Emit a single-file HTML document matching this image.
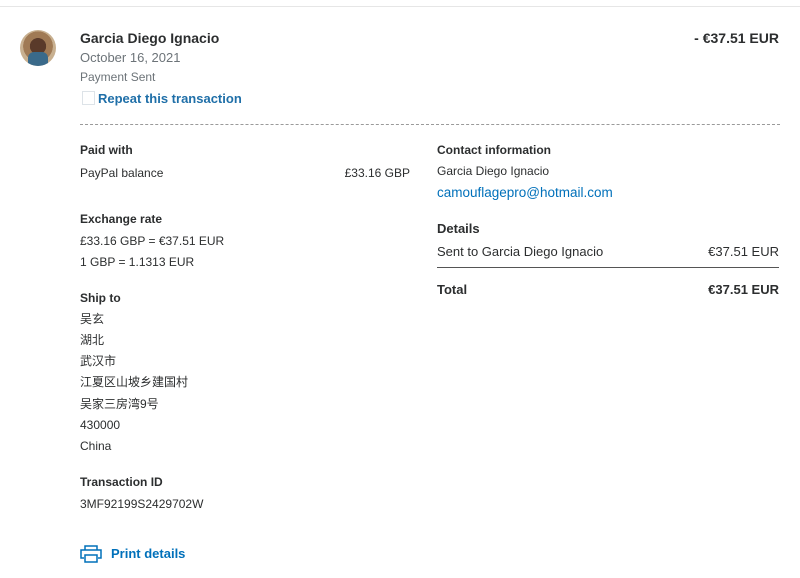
<!DOCTYPE html><html><head><meta charset="utf-8"><style>
body{margin:0;width:800px;height:578px;background:#fff;position:relative;overflow:hidden;font-family:"Liberation Sans","Noto Sans CJK SC",sans-serif;color:#2c2e2f;font-size:12px}
.a{position:absolute;white-space:nowrap;line-height:16px}
.b{font-weight:bold}
.g{color:#6c7378}
.l{color:#0070ba}
</style></head><body>
<div style="position:absolute;left:0;top:6px;width:800px;height:1px;background:#e6e6e6"></div>
<div style="position:absolute;left:20px;top:30px;width:36px;height:36px;border-radius:50%;background:radial-gradient(circle at 50% 45%,#5a3a2a 0 30%,#a07a55 31% 55%,#c8b090 56%),#8a6a4a;overflow:hidden"><div style="position:absolute;left:8px;top:22px;width:20px;height:14px;background:#3a6a8a;border-radius:6px 6px 0 0"></div></div>
<div class="a b" style="left:80px;top:30px;font-size:14px">Garcia Diego Ignacio</div>
<div class="a b" style="right:21px;top:30px;font-size:14px">- €37.51 EUR</div>
<div class="a g" style="left:80px;top:50px;font-size:13px">October 16, 2021</div>
<div class="a g" style="left:80px;top:69px">Payment Sent</div>
<div style="position:absolute;left:82px;top:91px;width:11px;height:12px;border:1px solid #dde3e8"></div>
<div class="a b" style="left:98px;top:91px;font-size:13px;color:#1f6fa8">Repeat this transaction</div>
<div style="position:absolute;left:80px;top:124px;width:700px;border-top:1px dashed #9a9a9a"></div>
<div class="a b" style="left:80px;top:142px">Paid with</div>
<div class="a" style="left:80px;top:165px">PayPal balance</div>
<div class="a" style="right:390px;top:165px">£33.16 GBP</div>
<div class="a b" style="left:80px;top:211px">Exchange rate</div>
<div class="a" style="left:80px;top:233px">£33.16 GBP = €37.51 EUR</div>
<div class="a" style="left:80px;top:254px">1 GBP = 1.1313 EUR</div>
<div class="a b" style="left:80px;top:290px">Ship to</div>
<div class="a" style="left:80px;top:311px">吴玄</div>
<div class="a" style="left:80px;top:332px">湖北</div>
<div class="a" style="left:80px;top:353px">武汉市</div>
<div class="a" style="left:80px;top:374px">江夏区山坡乡建国村</div>
<div class="a" style="left:80px;top:396px">吴家三房湾9号</div>
<div class="a" style="left:80px;top:417px">430000</div>
<div class="a" style="left:80px;top:438px">China</div>
<div class="a b" style="left:80px;top:474px">Transaction ID</div>
<div class="a" style="left:80px;top:496px">3MF92199S2429702W</div>
<svg style="position:absolute;left:80px;top:545px" width="22" height="18" viewBox="0 0 22 18" fill="none" stroke="#0070ba" stroke-width="1.5"><path d="M5 5V1h12v4M4 13H1V5h20v8h-3M5 10h12v7H5z"/></svg>
<div class="a b l" style="left:111px;top:546px;font-size:13px">Print details</div>
<div class="a b" style="left:437px;top:142px">Contact information</div>
<div class="a" style="left:437px;top:163px">Garcia Diego Ignacio</div>
<div class="a l" style="left:437px;top:185px;font-size:13.5px">camouflagepro@hotmail.com</div>
<div class="a b" style="left:437px;top:221px;font-size:13px">Details</div>
<div class="a" style="left:437px;top:244px;font-size:13px">Sent to Garcia Diego Ignacio</div>
<div class="a" style="right:21px;top:244px;font-size:13px">€37.51 EUR</div>
<div style="position:absolute;left:437px;top:267px;width:342px;height:1px;background:#555"></div>
<div class="a b" style="left:437px;top:282px;font-size:13px">Total</div>
<div class="a b" style="right:21px;top:282px;font-size:13px">€37.51 EUR</div>
</body></html>
